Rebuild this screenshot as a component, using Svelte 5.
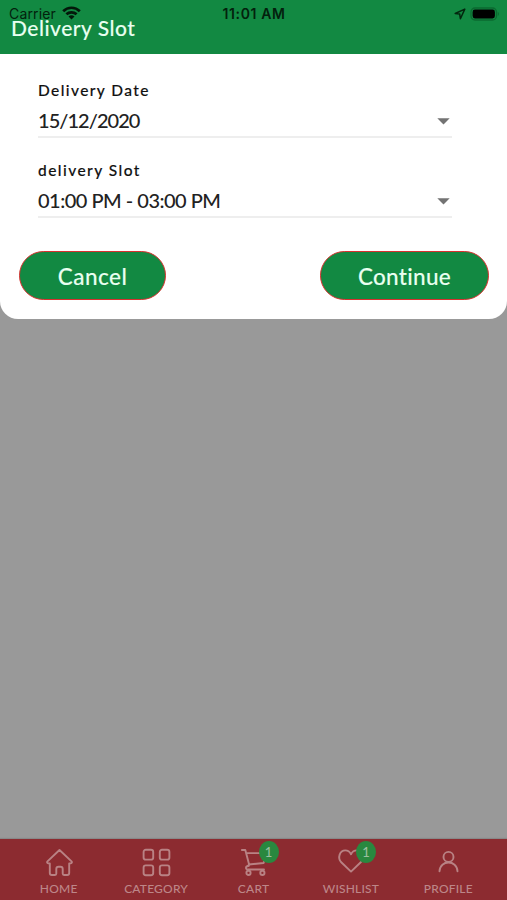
<script>
  const fields = [
    { label: 'Delivery Date', value: '15/12/2020', cls: 'date' },
    { label: 'delivery Slot', value: '01:00 PM - 03:00 PM', cls: 'slot' }
  ];
  const tabs = [
    { id: 'home', label: 'HOME' },
    { id: 'category', label: 'CATEGORY' },
    { id: 'cart', label: 'CART', badge: 1 },
    { id: 'wishlist', label: 'WISHLIST', badge: 1 },
    { id: 'profile', label: 'PROFILE' }
  ];
</script>

<div class="screen">
  <section class="sheet">
    <header>
      <h1><span>Delivery Slot</span></h1>
      <div class="status">
        <div class="carrier">
          <span>Carrier</span>
          <svg width="19" height="14" viewBox="0 0 19 14" fill="none" stroke="#03180a" stroke-width="2.7">
            <path d="M1.2 5.2C5.8.6 13.2.6 17.8 5.2" />
            <path d="M4.4 8.3C7.2 5.6 11.8 5.6 14.6 8.3" />
            <path d="M9.5 13.6 6.5 10.6Q9.5 8 12.5 10.6Z" fill="#03180a" stroke="none" />
          </svg>
        </div>
        <span class="time">11:01 AM</span>
        <div class="power">
          <svg width="12" height="12" viewBox="0 0 12 12" fill="none" stroke="#03260e" stroke-width="1.5" stroke-linejoin="round">
            <path d="M10.8 1.1 1.2 5.5 5.7 6.1 6.4 10.7Z" />
          </svg>
          <svg width="30" height="14" viewBox="0 0 30 14">
            <rect x="1" y="1" width="25.5" height="12" rx="4" fill="none" stroke="#0b6a30" stroke-width="1.3" />
            <rect x="2.6" y="2.6" width="22.3" height="8.8" rx="2.3" fill="#000" />
            <path d="M27.8 4.8Q30 7 27.8 9.2Z" fill="#0b6a30" />
          </svg>
        </div>
      </div>
    </header>

    <div class="fields">
      {#each fields as f}
        <div class="field {f.cls}">
          <span class="label">{f.label}</span>
          <div class="select">
            <span class="value">{f.value}</span>
            <svg width="13" height="7" viewBox="0 0 13 7"><path d="M.3.3H12.7L6.5 6.5Z" fill="#737373" /></svg>
          </div>
        </div>
      {/each}
    </div>

    <div class="actions">
      <button class="cancel">Cancel</button>
      <button class="continue">Continue</button>
    </div>
  </section>

  <nav>
    {#each tabs as t}
      <div class="tab {t.id}">
        <div class="icon">
          <svg width="30" height="30" viewBox="0 0 30 30" fill="none" stroke="#b98284" stroke-width="1.9" stroke-linecap="round" stroke-linejoin="round">
            {#if t.id === 'home'}
              <path d="M15.5 2 3.2 13.6Q2.5 15.5 5.8 15.5V25Q5.8 27 7.8 27H11Q12.3 27 12.3 25.5V21Q12.3 18.7 14.5 18.7H16.5Q18.7 18.7 18.7 21V25.5Q18.7 27 20 27H23.2Q25.2 27 25.2 25V15.5Q28.5 15.5 27.8 13.6Z" />
            {:else if t.id === 'category'}
              <rect x="2.6" y="1.8" width="9.6" height="9.8" rx="2.2" />
              <rect x="18.8" y="1.8" width="9.6" height="9.8" rx="2.2" />
              <rect x="2.6" y="17.4" width="9.6" height="9.8" rx="2.2" />
              <rect x="18.8" y="17.4" width="9.6" height="9.8" rx="2.2" />
            {:else if t.id === 'cart'}
              <path d="M2.9 2H6.3L10.3 17.2M7.1 5.1H27L24.6 15 9.7 16.5M10 17.7Q7 18 7 19.8T9 21.5H25" />
              <circle cx="9.5" cy="24.9" r="2.1" />
              <circle cx="23.4" cy="24.9" r="2.1" />
            {:else if t.id === 'wishlist'}
              <path d="M15 23.6 5 14C1.5 9.9 3.5 2.4 9.3 2.4Q13 2.4 15 6.2Q17 2.4 20.7 2.4C26.5 2.4 28.5 9.9 25 14Z" />
            {:else}
              <circle cx="15.5" cy="8.9" r="5" />
              <path d="M6.5 23.2C7 11.6 24 11.6 24.5 23.2" />
            {/if}
          </svg>
          {#if t.badge}<span class="badge">{t.badge}</span>{/if}
        </div>
        <span class="name">{t.label}</span>
      </div>
    {/each}
  </nav>
</div>

<style>
  :global(body) { margin: 0; }
  .screen {
    width: 507px; height: 900px; overflow: hidden;
    display: flex; flex-direction: column; justify-content: space-between;
    background: #999; font-family: Lato, "Noto Sans", sans-serif; font-weight: 500;
  }
  .sheet { height: 319px; background: #fff; border-radius: 0 0 18px 18px; overflow: hidden; }
  header { position: relative; height: 54px; background: #128942; }
  h1 {
    margin: 0; padding: 16px 0 0 11px; font-size: 21px; line-height: 24px;
    font-weight: 500; color: #e9fff0; letter-spacing: .5px; white-space: nowrap;
    -webkit-text-stroke: .1px #e9fff0;
  }
  .status {
    position: absolute; inset: 0 0 auto 0; height: 27px;
    display: grid; grid-template-columns: 1fr auto 1fr; align-items: center;
    font-family: Inter, sans-serif; color: #03210d;
  }
  .carrier { display: flex; align-items: center; gap: 6px; padding-left: 9px; font-size: 14px; font-weight: 400; letter-spacing: .15px; }
  .carrier svg { margin-top: -1px; }
  .time { font-size: 14px; font-weight: 600; letter-spacing: .6px; padding-left: 1px; }
  .power { display: flex; justify-content: flex-end; align-items: center; gap: 4px; padding-right: 7px; }
  .fields { padding: 26px 55px 0 38px; display: flex; flex-direction: column; gap: 11px; }
  .field { height: 69px; }
  .label { display: block; height: 21px; line-height: 21px; font-size: 15.5px; color: #111; letter-spacing: 1.4px; -webkit-text-stroke: .15px #111; }
  .field .select {
    height: 35px; display: flex; align-items: center; justify-content: space-between;
    border-bottom: 2px solid #eee; padding-right: 2px;
  }
  .select svg { position: relative; top: 3px; }
  .value { font-size: 20px; color: #222; white-space: nowrap; padding-top: 2px; }
  .date .value { letter-spacing: -.95px; }
  .slot .value { letter-spacing: -.5px; }
  .slot .label { letter-spacing: 1.45px; }
  .actions { display: flex; justify-content: space-between; padding: 22px 18px 0 19px; }
  button {
    box-sizing: border-box; height: 49px; padding: 0; border: 1px solid #d9302f; border-radius: 25px;
    background: #128942; color: #e9fff0; font: 500 22.5px/49px Lato, sans-serif; letter-spacing: .5px;
    -webkit-text-stroke: .1px #e9fff0;
  }
  .cancel { width: 147px; }
  .continue { width: 169px; letter-spacing: .3px; }
  nav {
    box-sizing: border-box; height: 61px; padding: 0 10px; display: flex;
    background: #8c2b30; box-shadow: 0 -1px 1px #888;
  }
  .tab { flex: 1; display: flex; flex-direction: column; align-items: center; padding-top: 9px; }
  .icon { position: relative; width: 30px; height: 30px; }
  .icon svg { display: block; }
  .badge {
    position: absolute; left: 20px; top: -7px; width: 20px; height: 22px; border-radius: 50%;
    background: #29883f; color: #9bbf9f; font-size: 13px; line-height: 22px; text-align: center;
  }
  .name { font-size: 12px; line-height: 16px; margin-top: 3px; color: #bd8688; white-space: nowrap; letter-spacing: .2px; }
</style>
